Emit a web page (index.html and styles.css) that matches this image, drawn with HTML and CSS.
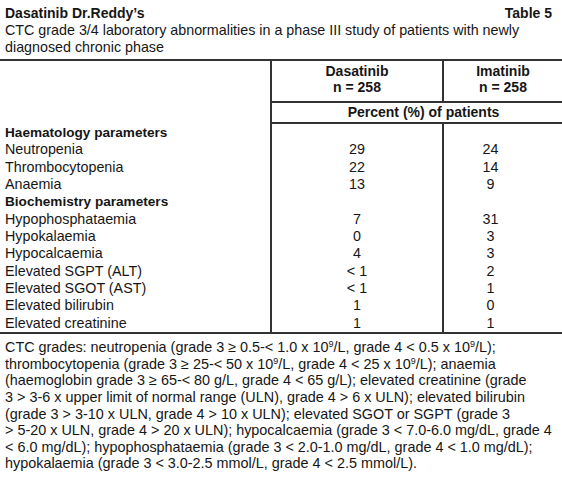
FILE: index.html
```
<!doctype html>
<html lang="en">
<head>
  <meta charset="utf-8">
  <title>Table 5</title>
  <link rel="stylesheet" href="styles.css">
</head>
<body>
  <div class="head">
    <div class="title-row">
      <span class="title">Dasatinib Dr.Reddy’s</span>
      <span class="table-no">Table 5</span>
    </div>
    <p class="caption">CTC grade 3/4 laboratory abnormalities in a phase III study of patients with newly diagnosed chronic phase</p>
  </div>

  <table class="data">
    <colgroup>
      <col class="c-label">
      <col class="c-das">
      <col class="c-ima">
    </colgroup>
    <thead>
      <tr class="arms">
        <th class="label" rowspan="2"></th>
        <th class="arm">Dasatinib<br>n = 258</th>
        <th class="arm im">Imatinib<br>n = 258</th>
      </tr>
      <tr class="unit">
        <th colspan="2">Percent (%) of patients</th>
      </tr>
    </thead>
    <tbody>
      <tr class="group"><td class="label">Haematology parameters</td><td class="val"></td><td class="val im"></td></tr>
      <tr><td class="label">Neutropenia</td><td class="val">29</td><td class="val im">24</td></tr>
      <tr><td class="label">Thrombocytopenia</td><td class="val">22</td><td class="val im">14</td></tr>
      <tr><td class="label">Anaemia</td><td class="val">13</td><td class="val im">9</td></tr>
      <tr class="group"><td class="label">Biochemistry parameters</td><td class="val"></td><td class="val im"></td></tr>
      <tr><td class="label">Hypophosphataemia</td><td class="val">7</td><td class="val im">31</td></tr>
      <tr><td class="label">Hypokalaemia</td><td class="val">0</td><td class="val im">3</td></tr>
      <tr><td class="label">Hypocalcaemia</td><td class="val">4</td><td class="val im">3</td></tr>
      <tr><td class="label">Elevated SGPT (ALT)</td><td class="val">&lt; 1</td><td class="val im">2</td></tr>
      <tr><td class="label">Elevated SGOT (AST)</td><td class="val">&lt; 1</td><td class="val im">1</td></tr>
      <tr><td class="label">Elevated bilirubin</td><td class="val">1</td><td class="val im">0</td></tr>
      <tr><td class="label">Elevated creatinine</td><td class="val">1</td><td class="val im">1</td></tr>
    </tbody>
  </table>

  <p class="note">
    CTC grades: neutropenia (grade 3 ≥ 0.5-&lt; 1.0 x 10<sup>9</sup>/L, grade 4 &lt; 0.5 x 10<sup>9</sup>/L);<br>
    thrombocytopenia (grade 3 ≥ 25-&lt; 50 x 10<sup>9</sup>/L, grade 4 &lt; 25 x 10<sup>9</sup>/L); anaemia<br>
    (haemoglobin grade 3 ≥ 65-&lt; 80 g/L, grade 4 &lt; 65 g/L); elevated creatinine (grade<br>
    3 &gt; 3-6 x upper limit of normal range (ULN), grade 4 &gt; 6 x ULN); elevated bilirubin<br>
    (grade 3 &gt; 3-10 x ULN, grade 4 &gt; 10 x ULN); elevated SGOT or SGPT (grade 3<br>
    &gt; 5-20 x ULN, grade 4 &gt; 20 x ULN); hypocalcaemia (grade 3 &lt; 7.0-6.0 mg/dL, grade 4<br>
    &lt; 6.0 mg/dL); hypophosphataemia (grade 3 &lt; 2.0-1.0 mg/dL, grade 4 &lt; 1.0 mg/dL);<br>
    hypokalaemia (grade 3 &lt; 3.0-2.5 mmol/L, grade 4 &lt; 2.5 mmol/L).
  </p>
</body>
</html>
```

FILE: styles.css
```
body { margin: 0; background: #fff; color: #161616; font-family: "Liberation Sans", Arial, sans-serif; font-size: 14.3px; line-height: 17px; }

.head { padding: 5px 10px 0 5px; }
.title-row { display: flex; justify-content: space-between; align-items: baseline; }
.title, .table-no { font-weight: bold; font-size: 14px; }
.caption { margin: 0; }

.data { width: 562px; margin-top: 3px; table-layout: fixed; border-collapse: collapse; border-top: 2px solid #333; border-bottom: 2px solid #333; }
.c-label { width: 271px; }
.c-das { width: 172px; }
.c-ima { width: 119px; }
.data th { font-weight: bold; font-size: 14px; }
.data td, .data th { padding: 0; }
.label { text-align: left; padding-left: 5px !important; border-right: 2px solid #333; }

.arms .arm { text-align: center; line-height: 15.5px; height: 37px; padding-top: 3px !important; vertical-align: top; border-bottom: 2px solid #333; }
.arms .im { border-left: 2px solid #333; }
.unit th { text-align: center; height: 19px; line-height: 19px; padding-left: 13px !important; border-bottom: 2px solid #333; }

tbody td { line-height: 17.35px; height: 17.35px; }
.val { text-align: center; }
.val.im { border-left: 2px solid #333; padding-right: 25px !important; }
.group .label { font-weight: bold; font-size: 13.6px; }

.note { margin: 5px 0 0; padding-left: 5px; white-space: nowrap; font-size: 14.4px; line-height: 16.6px; }
.note sup { font-size: 9px; line-height: 0; vertical-align: 5px; }
```
